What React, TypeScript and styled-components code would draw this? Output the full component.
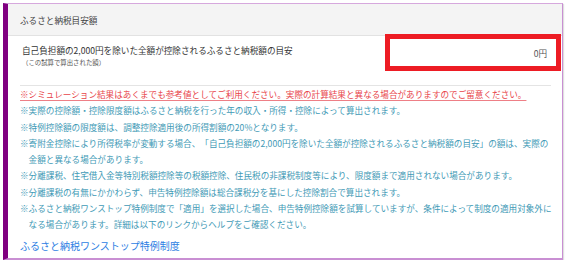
import { FC } from 'react';
import styled, { createGlobalStyle } from 'styled-components';

const GlobalStyle = createGlobalStyle`
  * {
    box-sizing: border-box;
  }
  body {
    margin: 0;
    background-color: #fff;
    font-family: 'Noto Sans CJK JP', 'Noto Sans', sans-serif;
    text-spacing-trim: space-all;
  }
`;

const notes: string[] = [
  '※実際の控除額・控除限度額はふるさと納税を行った年の収入・所得・控除によって算出されます。',
  '※特例控除額の限度額は、調整控除適用後の所得割額の20%となります。',
  '※寄附金控除により所得税率が変動する場合、「自己負担額の2,000円を除いた全額が控除されるふるさと納税額の目安」の額は、実際の金額と異なる場合があります。',
  '※分離課税、住宅借入金等特別税額控除等の税額控除、住民税の非課税制度等により、限度額まで適用されない場合があります。',
  '※分離課税の有無にかかわらず、申告特例控除額は総合課税分を基にした控除割合で算出されます。',
  '※ふるさと納税ワンストップ特例制度で「適用」を選択した場合、申告特例控除額を試算していますが、条件によって制度の適用対象外になる場合があります。詳細は以下のリンクからヘルプをご確認ください。',
];

const App: FC = () => {
  return (
    <>
      <GlobalStyle />
      <Card>
        <Header>ふるさと納税目安額</Header>
        <Body>
          <ResultRow>
            <Label>
              <div className="main">自己負担額の2,000円を除いた全額が控除されるふるさと納税額の目安</div>
              <div className="sub">（この試算で算出された額）</div>
            </Label>
            <ValueBox>0円</ValueBox>
          </ResultRow>
          <Notes>
            <Note $warning>
              <span>※シミュレーション結果はあくまでも参考値としてご利用ください。実際の計算結果と異なる場合がありますのでご留意ください。</span>
            </Note>
            {notes.map((note) => (
              <Note key={note}>{note}</Note>
            ))}
          </Notes>
          <HelpLink href="#">ふるさと納税ワンストップ特例制度</HelpLink>
        </Body>
      </Card>
    </>
  );
};

export default App;

const Card = styled.div`
  margin: 3px 0 0 3px;
  width: 560px;
  height: 257px;
  border-top: 1px solid #d6a8dd;
  border-right: 1px solid #c98fd3;
  border-bottom: 2px solid #c98fd3;
  border-left: 5px solid #800080;
  box-shadow: 1px 1px 1px rgba(0, 0, 0, 0.12);
  display: flex;
  flex-direction: column;
`;

const Header = styled.div`
  height: 32px;
  padding-left: 12px;
  display: flex;
  align-items: center;
  background-color: #f4f4f4;
  border-bottom: 1px solid #e2e2e2;
  color: #444;
  font-size: 8.6px;
`;

const Body = styled.div`
  padding: 0 11px 0 12px;
  display: flex;
  flex-direction: column;
`;

const ResultRow = styled.div`
  height: 50px;
  display: flex;
  justify-content: space-between;
  align-items: flex-start;
  border-bottom: 1px solid #e4e4e4;
`;

const Label = styled.div`
  padding: 7px 0 0 2px;
  .main {
    color: #333;
    font-size: 8.6px;
    line-height: 14px;
  }
  .sub {
    margin-top: 1px;
    color: #555;
    font-size: 6.4px;
    line-height: 10px;
  }
`;

const ValueBox = styled.div`
  width: 176px;
  height: 37px;
  margin: -2px -10px 0 0;
  padding-right: 9px;
  display: flex;
  justify-content: flex-end;
  align-items: center;
  border: 5px solid #ed1c24;
  color: #555;
  font-size: 8.6px;
`;

const Notes = styled.div`
  width: 535px;
  display: flex;
  flex-direction: column;
`;

const Note = styled.div<{ $warning?: boolean }>`
  padding-left: 1em;
  text-indent: -1em;
  font-size: 8.6px;
  line-height: 16.3px;
  color: ${(props) => (props.$warning ? '#e8454a' : '#3f9ab6')};
  span {
    text-decoration: underline;
    text-decoration-color: #ee7f86;
    text-underline-offset: 2px;
  }
`;

const HelpLink = styled.a`
  margin-top: 5px;
  align-self: flex-start;
  color: #2d7ee3;
  font-size: 10px;
  line-height: 16px;
  text-decoration: none;
`;
